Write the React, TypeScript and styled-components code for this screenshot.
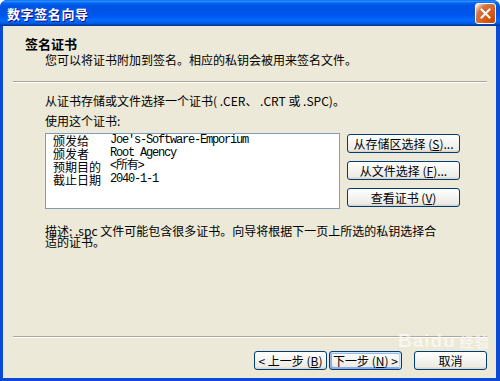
import styled, { createGlobalStyle } from 'styled-components';

const GlobalStyle = createGlobalStyle`
  html, body {
    margin: 0;
    padding: 0;
    background: #ffffff;
  }
  body {
    font-family: "Noto Sans CJK SC", sans-serif;
    font-size: 12px;
    color: #000;
  }
`;

const Frame = styled.div`
  position: relative;
  width: 500px;
  height: 381px;
  display: flex;
  flex-direction: column;
  background: #0a4ad6;
  border-radius: 7px 7px 0 0;
  overflow: hidden;
`;

const TitleBar = styled.div`
  height: 26px;
  flex: 0 0 26px;
  display: flex;
  align-items: center;
  justify-content: space-between;
  padding: 0 4px 0 7px;
  background: linear-gradient(
    to bottom,
    #0058ee 0%,
    #3593ff 4%,
    #288eff 6%,
    #127dff 8%,
    #036ffc 10%,
    #0262ee 14%,
    #0057e5 20%,
    #0054e3 24%,
    #0055eb 56%,
    #005bf5 66%,
    #026afe 76%,
    #0062ef 86%,
    #0052d6 92%,
    #0040ab 96%,
    #003092 100%
  );
`;

const TitleText = styled.span`
  color: #fff;
  font-weight: bold;
  font-size: 13px;
  letter-spacing: 0.6px;
  text-shadow: 1px 1px #0f1089;
`;

const CloseButton = styled.div`
  width: 19px;
  height: 19px;
  border: 1px solid #fff;
  border-radius: 3px;
  display: flex;
  align-items: center;
  justify-content: center;
  background: radial-gradient(
    circle at 90% 90%,
    #cc4600 0%,
    #dc6527 55%,
    #cd7546 70%,
    #ffccb2 90%,
    #ffffff 100%
  );
`;

const Client = styled.div`
  flex: 1;
  margin: 0 4px 3px 3px;
  background: #ece9d8;
  display: flex;
  flex-direction: column;
`;

const Header = styled.div`
  height: 55px;
  padding: 10px 0 0 22px;
  box-sizing: border-box;
`;

const HeaderTitle = styled.div`
  font-weight: bold;
  font-size: 13px;
  line-height: 16px;
`;

const HeaderSub = styled.div`
  padding-left: 20px;
  line-height: 16px;
`;

const Separator = styled.div<{ $push?: boolean }>`
  margin: ${(p) => (p.$push ? 'auto' : '0')} 9px 0 10px;
  border-top: 1px solid #aca899;
  border-bottom: 1px solid #ffffff;
`;

const Body = styled.div`
  padding: 10px 0 0 42px;
`;

const Line = styled.div`
  line-height: 16px;
  margin-bottom: 4px;
`;

const CertRow = styled.div`
  display: flex;
  align-items: flex-start;
  gap: 7px;
`;

const ListBox = styled.div`
  width: 295px;
  height: 76px;
  box-sizing: border-box;
  background: #fff;
  border: 1px solid #7f9db9;
  padding: 0 0 0 7px;
`;

const InfoRow = styled.div`
  display: flex;
  line-height: 13px;
  height: 13px;
`;

const InfoLabel = styled.span`
  width: 57px;
  flex: 0 0 57px;
`;

const InfoValue = styled.span`
  font-family: "Liberation Mono", "Noto Sans CJK SC", monospace;
  letter-spacing: -1.2px;
`;

const ButtonColumn = styled.div`
  display: flex;
  flex-direction: column;
  gap: 8px;
  padding-top: 1px;
`;

const XPButton = styled.button<{ $width: number; $default?: boolean }>`
  width: ${(p) => p.$width}px;
  height: 19px;
  padding: 0;
  font-family: "Noto Sans CJK SC", sans-serif;
  font-size: 12px;
  line-height: 16px;
  color: #000;
  border: 1px solid #003c74;
  border-radius: 3px;
  background: linear-gradient(180deg, #ffffff 0%, #ecebe6 86%, #d6d0c5 100%);
  box-shadow: ${(p) =>
    p.$default
      ? 'inset -1px 1px #cee7ff, inset 1px 2px #98b8ea, inset -2px 2px #bcd4f6, inset 1px -1px #89ade4, inset 2px -2px #89ade4'
      : 'none'};
  white-space: nowrap;

  u {
    text-decoration: underline;
  }
`;

const Description = styled.div`
  margin-top: 16px;
  line-height: 11px;
`;

const Footer = styled.div`
  display: flex;
  justify-content: flex-end;
  align-items: center;
  padding: 13px 9px 8px 0;
`;

const NavGroup = styled.div`
  display: flex;
  gap: 2px;
  margin-right: 12px;
`;

const Watermark = styled.div`
  position: absolute;
  left: 398px;
  top: 330px;
  color: rgba(255, 255, 255, 0.6);
  font-family: "Liberation Sans", "Noto Sans CJK SC", sans-serif;
  font-size: 19px;
  font-weight: bold;
  letter-spacing: 1px;
  pointer-events: none;

  small {
    font-size: 14px;
    margin-left: 4px;
  }
`;

export default function App() {
  return (
    <>
      <GlobalStyle />
      <Frame>
        <TitleBar>
          <TitleText>数字签名向导</TitleText>
          <CloseButton>
            <svg width='11' height='11' viewBox='0 0 11 11'>
              <path d='M1.5 1.5 L9.5 9.5 M9.5 1.5 L1.5 9.5' stroke='#fff' strokeWidth='2' strokeLinecap='square' />
            </svg>
          </CloseButton>
        </TitleBar>
        <Client>
          <Header>
            <HeaderTitle>签名证书</HeaderTitle>
            <HeaderSub>您可以将证书附加到签名。相应的私钥会被用来签名文件。</HeaderSub>
          </Header>
          <Separator />
          <Body>
            <Line>从证书存储或文件选择一个证书( .CER、 .CRT 或 .SPC)。</Line>
            <Line>使用这个证书:</Line>
            <CertRow>
              <ListBox>
                <InfoRow>
                  <InfoLabel>颁发给</InfoLabel>
                  <InfoValue>Joe's-Software-Emporium</InfoValue>
                </InfoRow>
                <InfoRow>
                  <InfoLabel>颁发者</InfoLabel>
                  <InfoValue>Root Agency</InfoValue>
                </InfoRow>
                <InfoRow>
                  <InfoLabel>预期目的</InfoLabel>
                  <InfoValue>&lt;所有&gt;</InfoValue>
                </InfoRow>
                <InfoRow>
                  <InfoLabel>截止日期</InfoLabel>
                  <InfoValue>2040-1-1</InfoValue>
                </InfoRow>
              </ListBox>
              <ButtonColumn>
                <XPButton $width={113}>
                  从存储区选择 (<u>S</u>)...
                </XPButton>
                <XPButton $width={113}>
                  从文件选择 (<u>F</u>)...
                </XPButton>
                <XPButton $width={113}>
                  查看证书 (<u>V</u>)
                </XPButton>
              </ButtonColumn>
            </CertRow>
            <Description>
              描述:  .spc 文件可能包含很多证书。向导将根据下一页上所选的私钥选择合
              <br />
              适的证书。
            </Description>
          </Body>
          <Separator $push />
          <Footer>
            <NavGroup>
              <XPButton $width={73}>
                &lt; 上一步 (<u>B</u>)
              </XPButton>
              <XPButton $width={73} $default>
                下一步 (<u>N</u>) &gt;
              </XPButton>
            </NavGroup>
            <XPButton $width={73}>取消</XPButton>
          </Footer>
        </Client>
        <Watermark>
          Baidu<small>经验</small>
        </Watermark>
      </Frame>
    </>
  );
}
